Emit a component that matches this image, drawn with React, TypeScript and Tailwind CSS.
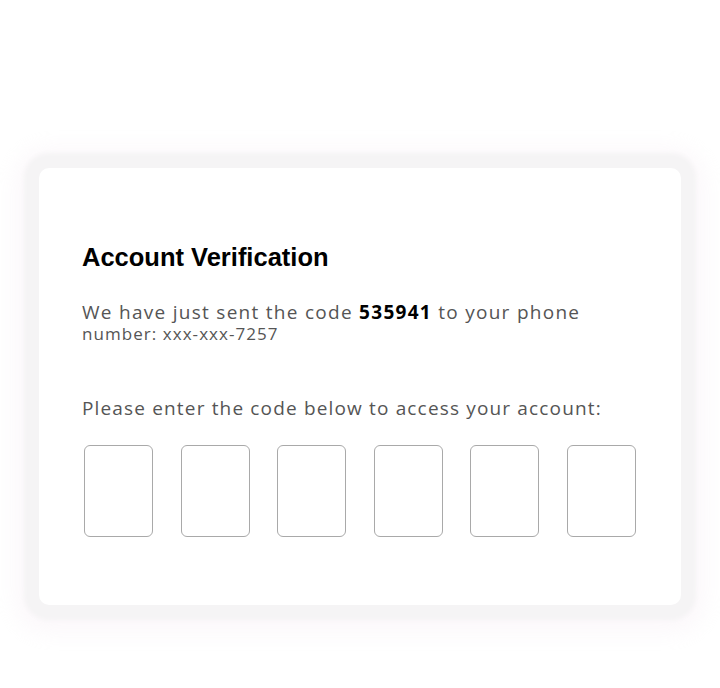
const digits = [0, 1, 2, 3, 4, 5];

export default function App() {
  return (
    <main className="min-h-[688px] bg-white pt-[168px]">
      <div className="mx-auto w-[642px] rounded-[10px] bg-white pb-[68px] pl-[43px] pr-[44px] pt-[74px] shadow-[0_0_4px_15px_#f5f4f5,0_4px_24px_22px_rgba(250,244,248,0.7)]">
        <h1 className="font-['Liberation_Sans',Arial,sans-serif] text-[25.5px] font-bold leading-[30px] text-black">
          Account Verification
        </h1>

        <p className="mt-[28px] font-['Open_Sans',sans-serif] text-[#555]">
          <span className="block text-[19px] leading-[24px] tracking-[1.28px]">
            We have just sent the code{" "}
            <b className="font-bold text-black">535941</b> to your phone
          </span>
          <span className="block text-[17px] leading-[20px] tracking-[1.05px]">
            number: xxx-xxx-7257
          </span>
        </p>

        <p className="mt-[53px] font-['Open_Sans',sans-serif] text-[19px] leading-[22px] tracking-[1.16px] text-[#555]">
          Please enter the code below to access your account:
        </p>

        <div className="mt-[26px] flex gap-[27.6px] pl-[2px]">
          {digits.map((d) => (
            <input
              key={d}
              aria-label={`Digit ${d + 1}`}
              maxLength={1}
              className="h-[92px] w-[69px] rounded-[6px] border border-[#a9a9a9] bg-white text-center font-['Open_Sans',sans-serif] text-3xl outline-none"
            />
          ))}
        </div>
      </div>
    </main>
  );
}
